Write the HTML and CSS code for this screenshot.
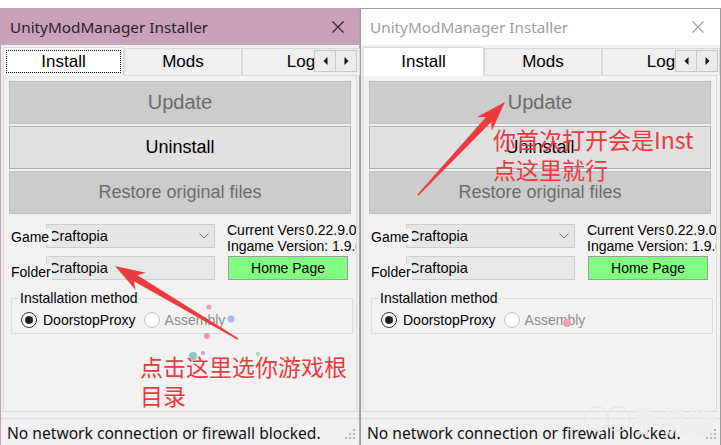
FILE: index.html
```html
<!DOCTYPE html>
<html>
<head>
<meta charset="utf-8">
<link rel="stylesheet" href="styles.css">
</head>
<body>
<div class="screen">
  <div class="window win-left">
    <div class="titlebar">
      <span class="title">UnityModManager Installer</span>
      <svg class="close" width="12" height="12" viewBox="0 0 12 12"><path d="M0.5 0.5L11.5 11.5M11.5 0.5L0.5 11.5" stroke="currentColor" stroke-width="1.1" fill="none"/></svg>
    </div>
    <div class="tabstrip">
      <div class="tab selected"><span class="tab-label focus">Install</span></div>
      <div class="tab">Mods</div>
      <div class="tab">Log</div>
      <div class="scroller">
        <span class="sbtn"><svg width="5" height="8" viewBox="0 0 5 8"><path d="M4.5 0L0.5 4L4.5 8Z" fill="#111"/></svg></span>
        <span class="sbtn"><svg width="5" height="8" viewBox="0 0 5 8"><path d="M0.5 0L4.5 4L0.5 8Z" fill="#111"/></svg></span>
      </div>
    </div>
    <div class="panel">
      <div class="btn btn-disabled btn-big">Update</div>
      <div class="btn">Uninstall</div>
      <div class="btn btn-disabled">Restore original files</div>
      <div class="info">
        <div class="fields">
          <div class="row">
            <span class="lbl">Game</span>
            <div class="combo"><span class="combo-text">Craftopia</span><svg class="chev" width="10" height="6" viewBox="0 0 10 6"><path d="M0.5 0.5L5 5L9.5 0.5" stroke="#6a6a6a" stroke-width="1" fill="none"/></svg></div>
          </div>
          <div class="row">
            <span class="lbl lbl-folder">Folder</span>
            <div class="textbox">Craftopia</div>
          </div>
        </div>
        <div class="versions">
          <div class="vrow"><span class="vlabel vlabel-cur">Current Version:</span><span class="vval">0.22.9.0</span></div>
          <div class="vrow"><span class="vlabel vlabel-game">Ingame Version:</span><span class="vval">1.9.0</span></div>
          <div class="home">Home Page</div>
        </div>
      </div>
      <fieldset class="group">
        <legend>Installation method</legend>
        <div class="radios">
          <span class="radio checked"></span><span class="rlabel">DoorstopProxy</span>
          <span class="radio"></span><span class="rlabel rlabel-off">Assembly</span>
        </div>
      </fieldset>
    </div>
    <div class="status">
      <span class="status-text">No network connection or firewall blocked.</span>
      <svg class="grip" width="12" height="12" viewBox="0 0 12 12"><g fill="#b8b8b8"><rect x="9" y="1" width="2" height="2"/><rect x="5" y="5" width="2" height="2"/><rect x="9" y="5" width="2" height="2"/><rect x="1" y="9" width="2" height="2"/><rect x="5" y="9" width="2" height="2"/><rect x="9" y="9" width="2" height="2"/></g></svg>
    </div>
  </div>

  <div class="window win-right">
    <div class="titlebar">
      <span class="title">UnityModManager Installer</span>
      <svg class="close" width="12" height="12" viewBox="0 0 12 12"><path d="M0.5 0.5L11.5 11.5M11.5 0.5L0.5 11.5" stroke="currentColor" stroke-width="1.1" fill="none"/></svg>
    </div>
    <div class="tabstrip">
      <div class="tab selected"><span class="tab-label">Install</span></div>
      <div class="tab">Mods</div>
      <div class="tab">Log</div>
      <div class="scroller">
        <span class="sbtn"><svg width="5" height="8" viewBox="0 0 5 8"><path d="M4.5 0L0.5 4L4.5 8Z" fill="#111"/></svg></span>
        <span class="sbtn"><svg width="5" height="8" viewBox="0 0 5 8"><path d="M0.5 0L4.5 4L0.5 8Z" fill="#111"/></svg></span>
      </div>
    </div>
    <div class="panel">
      <div class="btn btn-disabled btn-big">Update</div>
      <div class="btn">Uninstall</div>
      <div class="btn btn-disabled">Restore original files</div>
      <div class="info">
        <div class="fields">
          <div class="row">
            <span class="lbl">Game</span>
            <div class="combo"><span class="combo-text">Craftopia</span><svg class="chev" width="10" height="6" viewBox="0 0 10 6"><path d="M0.5 0.5L5 5L9.5 0.5" stroke="#6a6a6a" stroke-width="1" fill="none"/></svg></div>
          </div>
          <div class="row">
            <span class="lbl lbl-folder">Folder</span>
            <div class="textbox">Craftopia</div>
          </div>
        </div>
        <div class="versions">
          <div class="vrow"><span class="vlabel vlabel-cur">Current Version:</span><span class="vval">0.22.9.0</span></div>
          <div class="vrow"><span class="vlabel vlabel-game">Ingame Version:</span><span class="vval">1.9.0</span></div>
          <div class="home">Home Page</div>
        </div>
      </div>
      <fieldset class="group">
        <legend>Installation method</legend>
        <div class="radios">
          <span class="radio checked"></span><span class="rlabel">DoorstopProxy</span>
          <span class="radio"></span><span class="rlabel rlabel-off">Assembly</span>
        </div>
      </fieldset>
    </div>
    <div class="status">
      <span class="status-text">No network connection or firewall blocked.</span>
      <svg class="grip" width="12" height="12" viewBox="0 0 12 12"><g fill="#b8b8b8"><rect x="9" y="1" width="2" height="2"/><rect x="5" y="5" width="2" height="2"/><rect x="9" y="5" width="2" height="2"/><rect x="1" y="9" width="2" height="2"/><rect x="5" y="9" width="2" height="2"/><rect x="9" y="9" width="2" height="2"/></g></svg>
    </div>
  </div>

  <div class="overlay">
    <svg class="marks" width="721" height="445" viewBox="0 0 721 445">
      <polygon fill="#ee3b3f" points="115,266 145.9,272.7 137.4,275.2 238.4,338.3 237.6,339.7 133.8,281.2 135.7,289.9"/>
      <polygon fill="#ee3b3f" points="505,102 491.8,130.7 491.2,121.9 418.6,195.5 417.4,194.5 486,117.1 477.2,117.1"/>
      <circle cx="209" cy="307" r="2.5" fill="#eaa0ad"/>
      <circle cx="231" cy="319" r="3.5" fill="#a9b9ec"/>
      <circle cx="207" cy="336" r="3" fill="#e79aa8"/>
      <circle cx="193" cy="356" r="4" fill="#8cc6bd"/>
      <circle cx="203" cy="353" r="2" fill="#b6a6e6"/>
      <circle cx="258" cy="354" r="2" fill="#a6dca6"/>
      <circle cx="567" cy="323" r="4" fill="#e9a2ab"/>
      <g fill="none" stroke="#e6e6e6" stroke-width="1.5">
        <circle cx="597" cy="419" r="12"/>
        <circle cx="618" cy="419" r="12"/>
      </g>
    </svg>
    <div class="note note-left">点击这里选你游戏根<br>目录</div>
    <div class="note note-right">你首次打开会是Inst<br>点这里就行</div>
    <div class="watermark">手机版</div>
  </div>
</div>
</body>
</html>
```

FILE: styles.css
```css
html, body {
  margin: 0;
  padding: 0;
  background: #ffffff;
}

body {
  font-family: "Liberation Sans", Arial, sans-serif;
  color: #000;
}

.screen {
  position: relative;
  display: flex;
  width: 721px;
  height: 445px;
  padding-top: 8px;
  box-sizing: border-box;
  overflow: hidden;
}

.window {
  flex: none;
  box-sizing: border-box;
  height: 440px;
  display: flex;
  flex-direction: column;
  background: #f0f0f0;
  border: 1px solid #9c9c9c;
}

.win-left {
  width: 360px;
  border-color: #c4a0b7;
  border-right-color: #a9a9a9;
}

.win-right {
  width: 361px;
}

/* title bar */
.titlebar {
  flex: none;
  height: 36px;
  display: flex;
  align-items: center;
  justify-content: space-between;
  padding: 0 15px 0 9px;
}

.win-left .titlebar {
  background: #c9a2ba;
  color: #2b1d27;
}

.win-right .titlebar {
  background: #ffffff;
  color: #9d9d9d;
  padding-right: 16px;
}

.title {
  font-family: "Noto Sans", sans-serif;
  font-size: 15.3px;
  line-height: 20px;
}

.close {
  display: block;
}

/* tabs */
.tabstrip {
  flex: none;
  position: relative;
  height: 30px;
  display: flex;
  align-items: flex-end;
  padding-left: 2px;
}

.tab {
  flex: none;
  box-sizing: border-box;
  width: 118px;
  height: 27px;
  border: 1px solid #d9d9d9;
  border-bottom: none;
  background: #efefef;
  display: flex;
  align-items: center;
  justify-content: center;
  font-size: 17px;
}

.tab.selected {
  position: relative;
  z-index: 1;
  width: 121px;
  height: 29px;
  margin-bottom: -1px;
  background: #ffffff;
  border-color: #dadada;
  padding: 2px 2px 3px 2px;
}

.tab-label {
  flex: 1;
  align-self: stretch;
  display: flex;
  align-items: center;
  justify-content: center;
  border: 1px solid transparent;
}

.tab-label.focus {
  border: 1px dotted #111;
}

.scroller {
  position: absolute;
  right: 2px;
  top: 5px;
  z-index: 2;
  display: flex;
}

.sbtn {
  box-sizing: border-box;
  width: 22px;
  height: 22px;
  border: 1px solid #c9c9c9;
  background: #ececec;
  display: flex;
  align-items: center;
  justify-content: center;
}

.sbtn + .sbtn {
  margin-left: -1px;
}

/* panel */
.panel {
  flex: none;
  height: 337px;
  box-sizing: border-box;
  margin: 0 2px;
  border: 1px solid #dadada;
  background: #f2f2f2;
  padding: 5px;
  overflow: hidden;
  display: flex;
  flex-direction: column;
}

.win-right .panel {
  margin-right: 3px;
}

.btn {
  flex: none;
  box-sizing: border-box;
  height: 43px;
  border: 1px solid #adadad;
  background: #e1e1e1;
  display: flex;
  align-items: center;
  justify-content: center;
  font-size: 18px;
  color: #000;
}

.btn + .btn {
  margin-top: 2px;
}

.btn-disabled {
  background: #cccccc;
  border-color: #c0c0c0;
  color: #6b6b6b;
}

.btn-big {
  font-size: 20px;
}

.info {
  flex: none;
  display: flex;
  margin-top: 10px;
  font-size: 14px;
}

.fields {
  flex: none;
  width: 206px;
  display: flex;
  flex-direction: column;
  gap: 8px;
}

.row {
  display: flex;
  align-items: center;
  height: 24px;
}

.lbl {
  position: relative;
  z-index: 1;
  flex: none;
  box-sizing: border-box;
  width: 43px;
  height: 16px;
  line-height: 16px;
  padding-left: 2px;
  margin-right: -6px;
  margin-top: 2px;
  background: #f2f2f2;
  white-space: nowrap;
  overflow: hidden;
}

.lbl-folder {
  margin-top: 7px;
}

.combo {
  flex: none;
  box-sizing: border-box;
  width: 169px;
  height: 24px;
  border: 1px solid #cfcfcf;
  background: #e6e6e6;
  display: flex;
  align-items: center;
  padding: 0 5px 0 2px;
}

.combo-text {
  flex: 1;
  font-size: 14.5px;
}

.chev {
  display: block;
}

.textbox {
  flex: none;
  box-sizing: border-box;
  width: 169px;
  height: 24px;
  border: 1px solid #d0d0d0;
  background: #e8e8e8;
  display: flex;
  align-items: center;
  padding-left: 2px;
  font-size: 14.5px;
}

.versions {
  flex: none;
  margin-left: 12px;
  margin-top: -2px;
  display: flex;
  flex-direction: column;
}

.vrow {
  display: flex;
  height: 16px;
  line-height: 16px;
  white-space: nowrap;
}

.vlabel {
  flex: none;
  overflow: hidden;
}

.vlabel-cur {
  width: 77px;
  margin-right: 2px;
}

.vlabel-game {
  width: 104px;
  margin-right: 1px;
}

.home {
  box-sizing: border-box;
  width: 120px;
  height: 24px;
  margin: 2px 0 0 1px;
  border: 1px solid #9c9c9c;
  background: #80ff80;
  display: flex;
  align-items: center;
  justify-content: center;
}

/* group box */
.group {
  flex: none;
  margin: 10px -2px 0 2px;
  border: 1px solid #dcdcdc;
  padding: 0 7px 5px 7px;
  font-size: 14px;
  min-width: 0;
}

.group legend {
  padding: 0 1px;
  line-height: 16px;
}

.radios {
  display: flex;
  align-items: center;
  height: 16px;
  margin-top: 6px;
  margin-left: 2px;
}

.radio {
  flex: none;
  box-sizing: border-box;
  width: 16px;
  height: 16px;
  border-radius: 50%;
  border: 1px solid #c4c4c4;
  background: #ffffff;
  display: flex;
  align-items: center;
  justify-content: center;
}

.radio.checked {
  border-color: #333333;
}

.radio.checked::after {
  content: "";
  width: 8px;
  height: 8px;
  border-radius: 50%;
  background: #222222;
}

.rlabel {
  margin-left: 6px;
  margin-right: 8px;
  white-space: nowrap;
}

.rlabel-off {
  margin-left: 5px;
  color: #8d8d8d;
}

/* status bar */
.status {
  flex: 1;
  margin-top: 6px;
  border-top: 1px solid #dedede;
  display: flex;
  align-items: flex-start;
  padding: 4px 3px 0 6px;
}

.status-text {
  flex: 1;
  font-family: "Noto Sans", sans-serif;
  font-size: 15.6px;
  line-height: 20px;
  white-space: nowrap;
  color: #111;
}

.grip {
  flex: none;
  margin-top: 5px;
}

/* annotations */
.overlay {
  position: absolute;
  left: 0;
  top: 0;
  width: 721px;
  height: 445px;
  pointer-events: none;
}

.marks {
  position: absolute;
  left: 0;
  top: 0;
}

.note {
  position: absolute;
  font-family: "Noto Sans CJK SC", "Noto Sans", sans-serif;
  color: #ea3a40;
  white-space: nowrap;
}

.note-left {
  left: 140px;
  top: 352px;
  font-size: 23px;
  line-height: 29px;
}

.note-right {
  left: 493px;
  top: 124px;
  font-size: 23px;
  line-height: 30px;
}

.watermark {
  position: absolute;
  left: 632px;
  top: 400px;
  font-family: "Noto Sans CJK SC", sans-serif;
  font-size: 28px;
  font-weight: bold;
  color: rgba(255, 255, 255, 0.5);
  text-shadow: 0 0 1px #dcdcdc;
}
```
